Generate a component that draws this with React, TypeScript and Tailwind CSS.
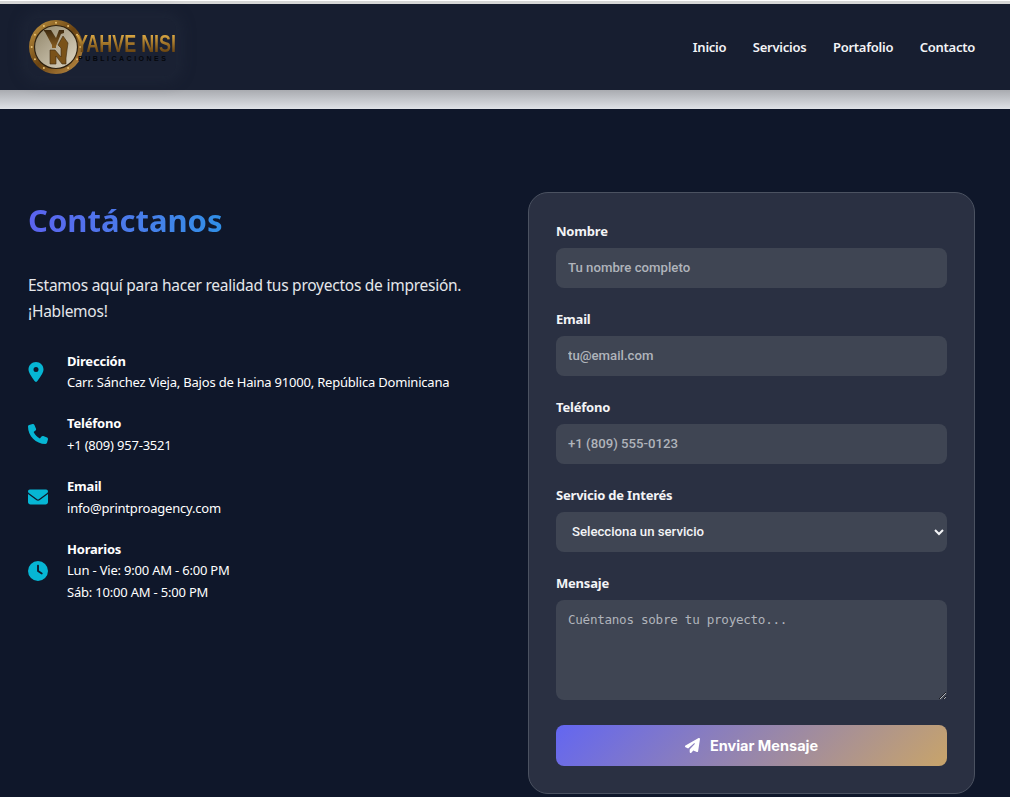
import React from "react";
import { FaLocationDot, FaPhone, FaEnvelope, FaClock, FaPaperPlane } from "react-icons/fa6";

const segoe = "font-['Noto_Sans','Open_Sans',sans-serif]";

const rivets = [0, 30, 60, 120, 150, 180, 210, 240, 270, 300, 330];

function Logo() {
  return (
    <div className="flex h-[58px] w-[148px] items-center rounded-xl bg-[#1a2133] shadow-[0_0_14px_6px_rgba(40,48,66,0.35)]">
      <svg width="56" height="56" viewBox="0 0 56 56" className="shrink-0">
        <defs>
          <linearGradient id="ring" x1="0" y1="0" x2="1" y2="1">
            <stop offset="0" stopColor="#c79a45" />
            <stop offset="0.5" stopColor="#6b4412" />
            <stop offset="1" stopColor="#c4934a" />
          </linearGradient>
          <linearGradient id="disc" x1="0" y1="0" x2="1" y2="1">
            <stop offset="0" stopColor="#8f8468" />
            <stop offset="1" stopColor="#e0d8c6" />
          </linearGradient>
          <linearGradient id="glyph" x1="0" y1="0" x2="0" y2="1">
            <stop offset="0" stopColor="#3d2a10" />
            <stop offset="1" stopColor="#8a5f22" />
          </linearGradient>
        </defs>
        <circle cx="28" cy="28" r="27" fill="url(#ring)" />
        <circle cx="28" cy="28" r="21.5" fill="url(#disc)" stroke="#2e2110" strokeWidth="1.2" />
        {rivets.map((a) => (
          <circle
            key={a}
            cx={28 + 24.3 * Math.cos((a * Math.PI) / 180)}
            cy={28 + 24.3 * Math.sin((a * Math.PI) / 180)}
            r="1"
            fill="#e8c274"
          />
        ))}
        <path d="M16 11h7l5 8 3-8h5v3l-3 1-5 12v2l-4 0v-3l-7-13-1-1z" fill="url(#glyph)" />
        <path
          d="M22 45V31h5l6 7v-9l-3-3 5-9 5 7-1 7-1 8v6h-4l-6-8v8z"
          fill="#7a5219"
          stroke="#3d2a10"
          strokeWidth="0.6"
        />
      </svg>
      <div className="-ml-[8px] flex flex-col pt-[2px] font-['Liberation_Sans',sans-serif]">
        <span className="origin-left scale-x-[0.78] whitespace-nowrap bg-gradient-to-b from-[#dba843] to-[#5e3a0c] bg-clip-text text-[23px] font-bold leading-[19px] text-transparent">
          YAHVÉ NISI
        </span>
        <span className="mt-[1px] whitespace-nowrap pl-[2px] text-[7px] font-bold leading-[7px] tracking-[2.5px] text-[#05070c]">
          PUBLICACIONES
        </span>
      </div>
    </div>
  );
}

function Header() {
  return (
    <header className="flex h-[86px] items-center justify-between bg-[#171e30] pl-[28px] pr-[35px]">
      <Logo />
      <nav className={`flex gap-[26.5px] pt-[2px] text-[13px] font-semibold tracking-[-0.25px] text-[#f3f4f6] ${segoe}`}>
        <a>Inicio</a>
        <a>Servicios</a>
        <a>Portafolio</a>
        <a>Contacto</a>
      </nav>
    </header>
  );
}

function InfoRow({ icon, title, lines }: { icon: React.ReactNode; title: string; lines: string[] }) {
  return (
    <div className="flex items-center">
      <div className="-mt-[1px] flex w-[39px] shrink-0 text-[20px] text-[#06b6d4]">{icon}</div>
      <div className={`text-[13px] leading-[21.6px] tracking-[-0.2px] text-white ${segoe}`}>
        <div className="font-bold">{title}</div>
        {lines.map((l) => (
          <div key={l}>{l}</div>
        ))}
      </div>
    </div>
  );
}

const labelCls = "mb-[7px] block text-[13px] font-bold leading-[20px] tracking-[-0.2px] text-[#f3f4f6] " + segoe;
const inputCls =
  "block h-[40px] w-full rounded-lg bg-[#3f4553] px-3 pb-[1px] font-['Roboto',sans-serif] text-[13.2px] font-medium text-[#f3f4f6] outline-none placeholder:text-[#b0b4bb]";

function Field({ label, placeholder }: { label: string; placeholder: string }) {
  return (
    <div>
      <label className={labelCls}>{label}</label>
      <input className={inputCls} placeholder={placeholder} />
    </div>
  );
}

export default function App() {
  return (
    <div className="h-[797px] overflow-hidden bg-[#0f172a]">
      <div className="h-px bg-white" />
      <div className="h-[3px] bg-[#d6d6d6]" />
      <Header />
      <div className="h-[19px] bg-gradient-to-b from-[#a9abb0] to-[#dfe2e7]" />
      <main className="grid grid-cols-[447px_447px] gap-[53px] pl-[28px] pt-[83px]">
        <section className={segoe}>
          <h1 className="mt-[4px] inline-block bg-gradient-to-r from-[#5b63ef] to-[#2f8fe6] bg-clip-text text-[31px] font-bold leading-[48px] text-transparent">
            Contáctanos
          </h1>
          <p className="mt-[28px] w-[450px] text-[15.5px] leading-[26px] tracking-[-0.25px] text-[#e5e7eb]">
            Estamos aquí para hacer realidad tus proyectos de impresión. ¡Hablemos!
          </p>
          <div className="mt-[26.6px] flex flex-col gap-[19.5px]">
            <InfoRow
              icon={<FaLocationDot className="-ml-[2.5px]" />}
              title="Dirección"
              lines={["Carr. Sánchez Vieja, Bajos de Haina 91000, República Dominicana"]}
            />
            <InfoRow icon={<FaPhone />} title="Teléfono" lines={["+1 (809) 957-3521"]} />
            <InfoRow icon={<FaEnvelope />} title="Email" lines={["info@printproagency.com"]} />
            <InfoRow
              icon={<FaClock />}
              title="Horarios"
              lines={["Lun - Vie: 9:00 AM - 6:00 PM", "Sáb: 10:00 AM - 5:00 PM"]}
            />
          </div>
        </section>
        <form className="flex h-[602px] flex-col rounded-[20px] border border-[#4b5261] bg-[#2a3042] px-[27px] pt-[28px]">
          <div className="flex flex-col gap-[21px]">
            <Field label="Nombre" placeholder="Tu nombre completo" />
            <Field label="Email" placeholder="tu@email.com" />
            <Field label="Teléfono" placeholder="+1 (809) 555-0123" />
            <div>
              <label className={labelCls}>Servicio de Interés</label>
              <select className={inputCls}>
                <option>Selecciona un servicio</option>
              </select>
            </div>
            <div>
              <label className={labelCls}>Mensaje</label>
              <textarea
                className="block h-[100px] w-full rounded-lg bg-[#3f4553] px-3 pb-[10px] pt-[11px] font-['DejaVu_Sans_Mono',monospace] text-[12.6px] tracking-[-0.28px] text-white outline-none placeholder:text-[#b0b4bb]"
                placeholder="Cuéntanos sobre tu proyecto..."
              />
            </div>
          </div>
          <button
            type="button"
            className="mt-[25px] flex h-[41px] w-full items-center justify-center gap-[10px] rounded-lg bg-[linear-gradient(135deg,#6366f1,#c8a46a)] font-['Inter',sans-serif] text-[14.5px] font-bold text-white"
          >
            <FaPaperPlane className="text-[15px]" />
            Enviar Mensaje
          </button>
        </form>
      </main>
    </div>
  );
}
